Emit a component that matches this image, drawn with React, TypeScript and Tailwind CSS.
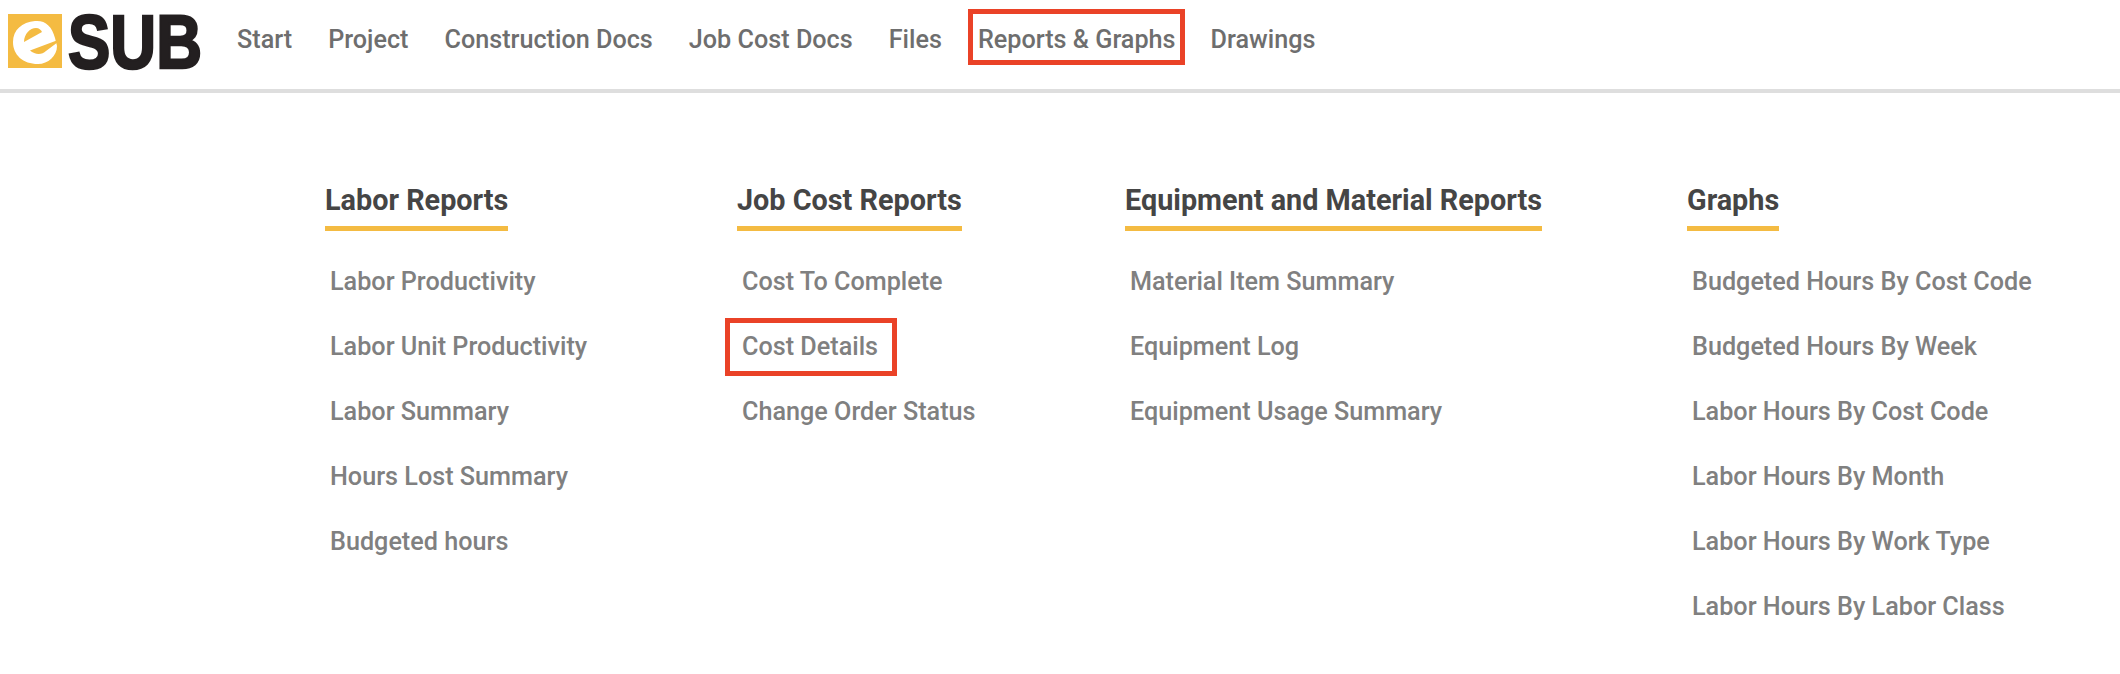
const navItems = ["Start", "Project", "Construction Docs", "Job Cost Docs", "Files", "Reports & Graphs", "Drawings"];

const columns = [
  { title: "Labor Reports", width: "w-[412px]", items: ["Labor Productivity", "Labor Unit Productivity", "Labor Summary", "Hours Lost Summary", "Budgeted hours"] },
  { title: "Job Cost Reports", width: "w-[388px]", items: ["Cost To Complete", "Cost Details", "Change Order Status"] },
  { title: "Equipment and Material Reports", width: "w-[562px]", items: ["Material Item Summary", "Equipment Log", "Equipment Usage Summary"] },
  { title: "Graphs", width: "w-[400px]", items: ["Budgeted Hours By Cost Code", "Budgeted Hours By Week", "Labor Hours By Cost Code", "Labor Hours By Month", "Labor Hours By Work Type", "Labor Hours By Labor Class"] },
];

function Logo() {
  return (
    <svg width="196" height="60" viewBox="0 0 196 60" className="shrink-0 overflow-visible">
      <rect x="0" y="0" width="54" height="54" fill="#f4bb42" />
      <path
        d="M27 7 C37 6 44 12 47 24 L49 32 C49 42 40 50 30 50 C15 50 5 41 5 28 C5 16 14 8 27 7 Z"
        fill="#ffffff"
      />
      <path d="M16 28 C16 20 22 14 28 14 C31 14 33 16 34 18 Z" fill="#f4bb42" />
      <path d="M50 26 L22 36.5 C27 41 34 41 38 37 L50 28 Z" fill="#f4bb42" />
      <text
        x="60"
        y="53.5"
        fontFamily="'Liberation Sans', Arial, sans-serif"
        fontWeight="700"
        fontSize="76"
        textLength="134"
        lengthAdjust="spacingAndGlyphs"
        fill="#231f20"
        stroke="#231f20"
        strokeWidth="2.5"
      >
        SUB
      </text>
    </svg>
  );
}

export default function App() {
  return (
    <div className="min-h-[674px] bg-white font-['Roboto',sans-serif] overflow-hidden">
      <header className="box-border h-[93px] border-b-[4px] border-[#dedede] flex items-start pl-[8px] pt-[14px]">
        <Logo />
        <nav className="flex items-center gap-[36px] ml-[33px] h-[51px] text-[25.2px] font-medium text-[#6e6e6e]">
          {navItems.map((n) =>
            n === "Reports & Graphs" ? (
              <span key={n} className="box-border -mx-[10px] -mt-[6px] border-[5px] border-[#ea4227] pl-[5px] pr-[4px] pt-[6px] h-[56px] flex items-center whitespace-nowrap">
                {n}
              </span>
            ) : (
              <span key={n} className="whitespace-nowrap">{n}</span>
            )
          )}
        </nav>
      </header>
      <main className="flex pl-[325px] pt-[90px]">
        {columns.map((c) => (
          <section key={c.title} className={`${c.width} shrink-0`}>
            <h2 className="inline-block h-[48px] border-b-[5px] border-[#f4bb42] text-[28.8px] leading-[35px] font-bold text-[#454545] whitespace-nowrap">
              {c.title}
            </h2>
            <ul className="mt-[18px] pl-[5px] text-[25.2px] font-medium text-[#808080]">
              {c.items.map((it) => (
                <li key={it} className="h-[65px] flex items-center whitespace-nowrap">
                  {it === "Cost Details" ? (
                    <span className="box-border -ml-[17px] border-[5px] border-[#ea4227] pl-[12px] pr-[14px] h-[58px] flex items-center">{it}</span>
                  ) : (
                    it
                  )}
                </li>
              ))}
            </ul>
          </section>
        ))}
      </main>
    </div>
  );
}
